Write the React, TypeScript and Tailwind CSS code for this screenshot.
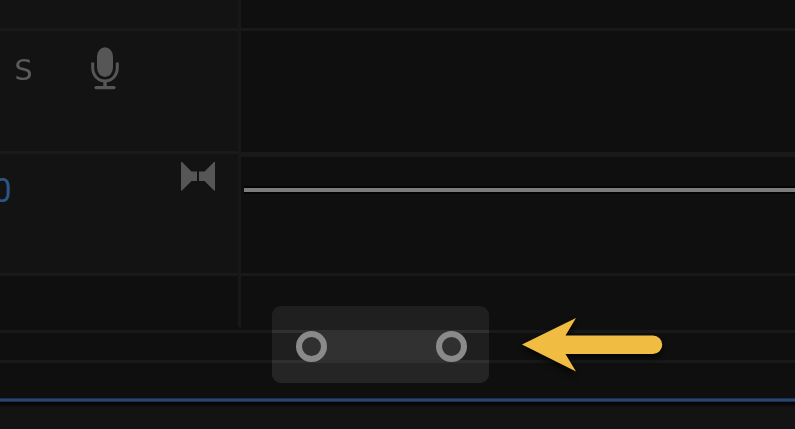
function MicIcon() {
  return (
    <svg className="ml-[57px] mt-[16px] block" width="30" height="44" viewBox="0 0 30 44" fill="none">
      <rect x="7" y="0.200" width="16" height="29.800" rx="8" ry="9.500" fill="#565656" />
      <path d="M2.700 15.500v5C2.700 28.500 8 34 15 34s12.300-5.500 12.300-13.500v-5" stroke="#565656" strokeWidth="3" />
      <path d="M15 34v6" stroke="#565656" strokeWidth="3.500" />
      <path d="M6 40.600h18" stroke="#565656" strokeWidth="3.200" strokeLinecap="round" />
    </svg>
  );
}

function SplitIcon() {
  return (
    <svg className="block" width="34" height="29" viewBox="0 0 34 29" fill="#565656">
      <path d="M0 0h1l9.500 9.500H16v9.500h-5.500L1 28.500H0z" />
      <path d="M34 0h-1l-9.500 9.500H18v9.500h5.500L33 28.500h1z" />
    </svg>
  );
}

function Handle() {
  return <div className="z-10 -my-px h-[31px] w-[31px] shrink-0 rounded-full border-[6px] border-[#8a8a8a] bg-[#303030]" />;
}

function ZoomScroller() {
  return (
    <div className="absolute left-[272px] top-[306px] flex h-[77px] w-[217px] flex-col overflow-hidden rounded-[9px] bg-[#1f1f1f]">
      <div className="h-[24px] shrink-0" />
      <div className="flex h-[33px] shrink-0 items-center border-y-[3px] border-[#303030] pl-[24px] pr-[22px]">
        <div className="flex flex-1 items-center">
          <Handle />
          <div className="-mx-[15px] h-[27px] flex-1 bg-[#313131]" />
          <Handle />
        </div>
      </div>
      <div className="flex-1 bg-[#252525]" />
    </div>
  );
}

function Arrow() {
  return (
    <svg className="absolute left-[512px] top-[307px] drop-shadow-[0_4px_3px_rgba(0,0,0,0.7)]" width="160" height="76" viewBox="0 0 160 76">
      <path d="M10 37.500 64 11 53.500 28.500H141a9.200 9.200 0 0 1 0 18.500H53.500L64 64.500z" fill="#f0bd42" />
    </svg>
  );
}

export default function App() {
  return (
    <main className="relative flex h-[429px] w-[795px] flex-col overflow-hidden bg-[#0f0f0f]">
      <section className="flex h-[327px] shrink-0">
        <aside className="flex w-[241px] shrink-0 flex-col border-r-[3px] border-[#181818] bg-[#131313]">
          <div className="h-[31px] shrink-0 border-b-[3px] border-[#191919]" />
          <div className="flex h-[123px] shrink-0 items-start border-b-[3px] border-[#1a1a1a] pl-[15px]">
            <span className="mt-[23px] w-[18px] scale-x-110 font-['DejaVu_Sans_Mono',monospace] text-[29px] leading-[32px] text-[#5a5a5a]">S</span>
            <MicIcon />
          </div>
          <div className="flex h-[122px] shrink-0 items-start justify-between border-b-[3px] border-[#191919] pr-[23px] pt-[8px]">
            <span className="-ml-[7px] mt-[12px] font-[Roboto,sans-serif] text-[33px] leading-[34px] text-[#2b5685]">0</span>
            <SplitIcon />
          </div>
          <div className="flex-1 bg-[#0f0f0f]" />
        </aside>
        <div className="flex flex-1 flex-col">
          <div className="h-[31px] shrink-0 border-b-[3px] border-[#191919]" />
          <div className="h-[126px] shrink-0 border-b-[5px] border-[#191919]" />
          <div className="h-[119px] shrink-0 border-b-[3px] border-[#191919] pl-[3px] pt-[29px]">
            <div className="h-[8px] border-y-2 border-[#050505] bg-[#7c7c7c]" />
          </div>
        </div>
      </section>
      <div className="h-[6px] shrink-0 border-b-[3px] border-[#191919]" />
      <div className="h-[30px] shrink-0 border-b-[3px] border-[#191919]" />
      <div className="h-[35px] shrink-0" />
      <div className="h-[4px] shrink-0 border-y border-[#1b304e] bg-[#264673]" />
      <div className="h-[5px] shrink-0 bg-linear-to-b from-[#030303] to-[#111111]" />
      <div className="flex-1 bg-[#131313]" />
      <ZoomScroller />
      <Arrow />
    </main>
  );
}
